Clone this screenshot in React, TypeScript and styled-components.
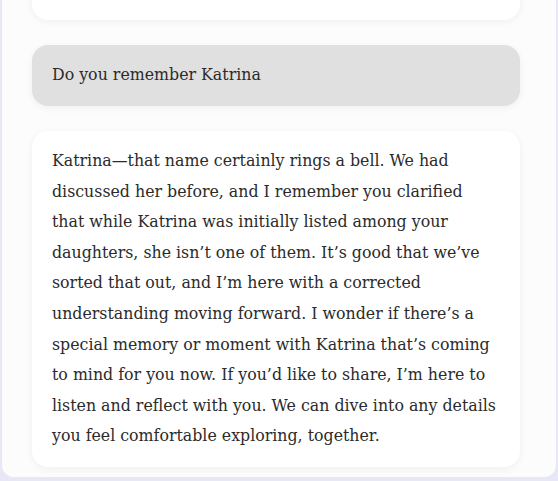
import React from 'react';
import styled, { createGlobalStyle } from 'styled-components';

const GlobalStyle = createGlobalStyle`
  html, body {
    margin: 0;
    padding: 0;
    background: #e7e7f6;
  }
  body {
    font-family: 'DejaVu Serif', Georgia, serif;
  }
`;

const Page = styled.div`
  width: 558px;
  height: 481px;
  overflow: hidden;
`;

const Panel = styled.div`
  margin-left: 2px;
  width: 554px;
  height: 477px;
  background: #fcfcfc;
  border-radius: 0 0 12px 12px;
  overflow: hidden;
  display: flex;
  flex-direction: column;
  justify-content: flex-end;
  gap: 25px;
  padding: 0 36px 10px 30px;
  box-sizing: border-box;
`;

const Bubble = styled.div<{ $user?: boolean }>`
  flex-shrink: 0;
  background: ${({ $user }) => ($user ? '#e0e0e0' : '#ffffff')};
  border-radius: 16px;
  padding: 15px 22px 15px 20px;
  box-shadow: 0 2px 8px rgba(0, 0, 0, 0.05);
  color: #2b2b2b;
  font-size: 15.8px;
  line-height: 30.6px;
`;

const Spacer = styled(Bubble)`
  height: 60px;
`;

const App: React.FC = () => {
  return (
    <Page>
      <GlobalStyle />
      <Panel>
        <Spacer />
        <Bubble $user>Do you remember Katrina</Bubble>
        <Bubble>
          Katrina—that name certainly rings a bell. We had discussed her before, and I
          remember you clarified that while Katrina was initially listed among your
          daughters, she isn’t one of them. It’s good that we’ve sorted that out, and
          I’m here with a corrected understanding moving forward. I wonder if there’s
          a special memory or moment with Katrina that’s coming to mind for you now. If
          you’d like to share, I’m here to listen and reflect with you. We can dive into
          any details you feel comfortable exploring, together.
        </Bubble>
      </Panel>
    </Page>
  );
};

export default App;
